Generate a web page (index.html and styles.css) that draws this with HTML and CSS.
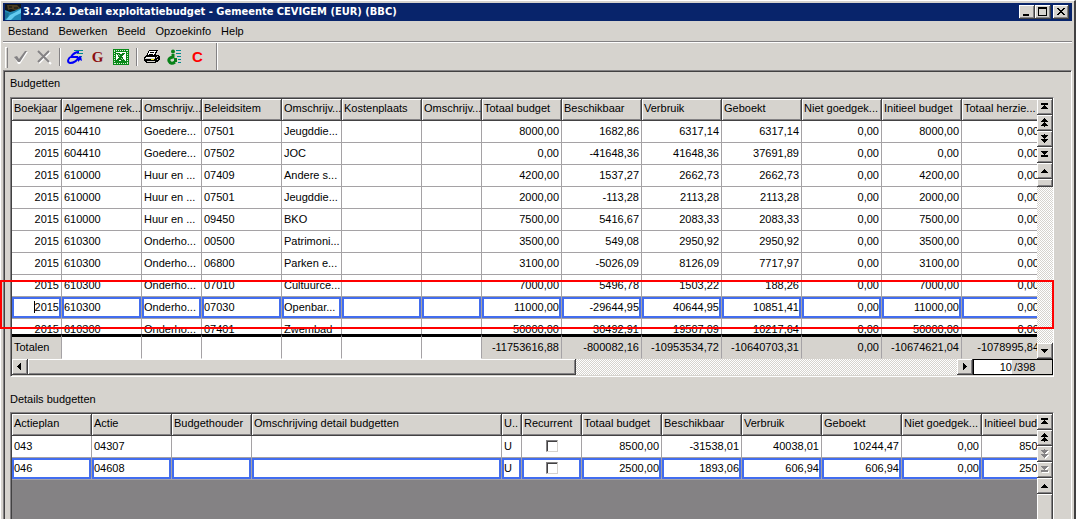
FILE: index.html
```html
<!DOCTYPE html>
<html lang="nl">
<head>
<meta charset="utf-8">
<title>3.2.4.2. Detail exploitatiebudget</title>
<link rel="stylesheet" href="styles.css">
</head>
<body>
<svg class="defs" aria-hidden="true">
  <symbol id="first" viewBox="0 0 9 9"><path d="M1 1h7v2H5v1h1v1h1v1h1v1H1V6h1V5h1V4h1V3H1z"/></symbol>
  <symbol id="pgup" viewBox="0 0 9 9"><path d="M4 0h1v1h1v1h1v1h1v1H5v1h1v1h1v1h1v1H5v1H4V8H1V7h1V6h1V5h1V4H1V3h1V2h1V1h1z"/></symbol>
  <symbol id="pgdn" viewBox="0 0 9 9"><path d="M4 9h1V8h1V7h1V6h1V5H5V4h1V3h1V2h1V1H5V0H4v1H1v1h1v1h1v1h1v1H1v1h1v1h1v1h1z"/></symbol>
  <symbol id="last" viewBox="0 0 9 9"><path d="M1 1h7v1H7v1H6v1H5v1h3v2H1V5h3V4H3V3H2V2H1z"/></symbol>
  <symbol id="up" viewBox="0 0 9 9"><path d="M4 3h1v1h1v1h1v1h1v1H1V6h1V5h1V4h1z"/></symbol>
  <symbol id="down" viewBox="0 0 9 9"><path d="M1 3h7v1H7v1H6v1H5v1H4V6H3V5H2V4H1z"/></symbol>
  <symbol id="left" viewBox="0 0 9 9"><path d="M2 4h1V3h1V2h1V1h1v7H5V7H4V6H3V5H2z"/></symbol>
  <symbol id="right" viewBox="0 0 9 9"><path d="M3 1h1v1h1v1h1v1h1v1H6v1H5v1H4v1H3z"/></symbol>
</svg>
<div class="window">
  <header class="titlebar">
    <svg class="app-icon" viewBox="0 0 16 16" aria-hidden="true"><path fill="#101418" d="M0 0h16v16H0z"/><path fill="#4a3c20" d="M2 1h10l3 3-2 3-7-2-3 1z"/><path fill="#29251a" d="M4 2h3v2H4zM9 3h4v2H9z"/><path fill="#2189b5" d="M0 6l5 2 4-1 7-3v12H0z"/><path fill="#63cbef" d="M1 16l4-5 6-3 5-3v4l-6 3-4 4z"/><path fill="#187194" d="M0 8l4 1-1 4-3 2z"/></svg>
    <h1>3.2.4.2. Detail exploitatiebudget - Gemeente CEVIGEM (EUR) (BBC)</h1>
    <button class="win-btn" aria-label="Minimaliseren"><svg viewBox="0 0 12 10"><path d="M2 7h6v2H2z"/></svg></button>
    <button class="win-btn" aria-label="Maximaliseren"><svg viewBox="0 0 12 10"><path fill-rule="evenodd" d="M1 0h9v9H1zM2 2v6h7V2z"/></svg></button>
    <button class="win-btn close" aria-label="Sluiten"><svg viewBox="0 0 12 10"><path d="M2 1h2v1h1v1h2V2h1V1h2v1H9v1H8v1H7v1h1v1h1v1h1v1H8V7H7V6H5v1H4v1H2V7h1V6h1V5h1V4H4V3H3V2H2z"/></svg></button>
  </header>
  <nav class="menubar">
    <button>Bestand</button><button>Bewerken</button><button>Beeld</button><button>Opzoekinfo</button><button>Help</button>
  </nav>
  <div class="toolbar">
    <span class="grip"></span>
    <button disabled aria-label="Bevestigen"><svg viewBox="0 0 16 16"><path fill="#fff" d="M2 9l2-1 2 3 6-8h3l-8 12H5z"/><path fill="#848284" d="M1 8l3-1 2 3 6-8h2L7 13H5z"/></svg></button>
    <button disabled aria-label="Annuleren"><svg viewBox="0 0 16 16"><path fill="none" stroke="#fff" stroke-width="2" d="M3 3l12 12M14 3L3 14"/><path fill="none" stroke="#848284" stroke-width="2" d="M2 2l11 11M13 2L2 13"/></svg></button>
    <span class="sep"></span>
    <button aria-label="Detail"><svg viewBox="0 0 16 16"><path fill="#008a8c" d="M7 1h9v1H7zM10 4h6v1h-6zM12 7h3v1h-3z"/><path fill="none" stroke="#0000f7" stroke-width="2" d="M12 3Q7 3 4 8h7M3 8q-4 5 0 6 6 0 9-6"/><path fill="#0000f7" d="M9 9l5-2 1 5-2-1-2 2v-3z"/></svg></button>
    <button class="letter-g">G</button>
    <button aria-label="Excel"><svg viewBox="0 0 16 16" shape-rendering="crispEdges"><path fill="#088a18" d="M0 0h16v16H0z"/><path fill="none" stroke="#d6efd6" stroke-dasharray="1 1" d="M1 1.500h14M2 14.500h13M1.500 2v13M14.500 1v14"/><path fill="#fff" d="M3 3h10v9H3z"/><path fill="#087d18" d="M3 4h4l5 8H8z"/><path fill="#087d18" d="M9 4h3l-6 8H3z"/><path fill="#9ccf9c" d="M5 5h1v1H5zM6 6h1v1H6zM8 9h1v1H8zM9 10h1v1H9z"/><path fill="#fff" d="M12 5h1v4h-1zM3 6h1v3H3z"/></svg></button>
    <span class="sep"></span>
    <button aria-label="Afdrukken"><svg viewBox="0 0 16 16" shape-rendering="crispEdges"><path fill="#000" d="M5 1h9v1h-1v2h-1v2h3v1h1v4h-1v1h-1v1h-2v1H2v-1H1v-1H0V8h1V7h1V6h1V4h1V2h1z"/><path fill="#fff" d="M5 2h7v1h-1v2h-1v1H4V4h1zM2 8h9v1H2z"/><path fill="#000" d="M6 3h4v1H6zM5 5h4v1H5z"/><path fill="#d6d3ce" d="M1 9h10v1H1zM3 12h8v1H3zM13 7h1v1h-1zM12 8h1v1h-1zM13 10h1v1h-1z"/><path fill="#f7f300" d="M7 10h3v1H7z"/></svg></button>
    <button aria-label="Info"><svg viewBox="0 0 16 16"><path fill="#008a8c" d="M9 1h5v1H9zM9 4h5v1H9zM10 7h4v1h-4zM11 10h3v1h-3zM11 13h3v1h-3z"/><circle cx="6" cy="2.500" r="2" fill="#088218"/><path fill="none" stroke="#088218" stroke-width="3" d="M6 5v3Q1 9 2 12q2 4 6 1"/><path fill="#088218" d="M7 9h3v4H7z"/></svg></button>
    <button class="letter-c">C</button>
    <span class="bar-end"></span>
  </div>
  <main class="panel">
    <h2>Budgetten</h2>
    <section class="grid" aria-label="Budgetten">
      <div class="pane">
        <div class="viewport budgets">
          <table>
            <colgroup><col class="w50"><col class="w80"><col class="w60"><col class="w80"><col class="w60"><col class="w80"><col class="w60"><col class="w80" span="7"></colgroup>
            <thead><tr><th>Boekjaar</th><th>Algemene rek...</th><th>Omschrijv...</th><th>Beleidsitem</th><th>Omschrijv...</th><th>Kostenplaats</th><th>Omschrijv...</th><th>Totaal budget</th><th>Beschikbaar</th><th>Verbruik</th><th>Geboekt</th><th>Niet goedgek...</th><th>Initieel budget</th><th>Totaal herzie...</th></tr></thead>
            <tbody>
              <tr><td class="n">2015</td><td>604410</td><td>Goedere...</td><td>07501</td><td>Jeugddie...</td><td></td><td></td><td class="n">8000,00</td><td class="n">1682,86</td><td class="n">6317,14</td><td class="n">6317,14</td><td class="n">0,00</td><td class="n">8000,00</td><td class="n">0,00</td></tr>
              <tr><td class="n">2015</td><td>604410</td><td>Goedere...</td><td>07502</td><td>JOC</td><td></td><td></td><td class="n">0,00</td><td class="n">-41648,36</td><td class="n">41648,36</td><td class="n">37691,89</td><td class="n">0,00</td><td class="n">0,00</td><td class="n">0,00</td></tr>
              <tr><td class="n">2015</td><td>610000</td><td>Huur en ...</td><td>07409</td><td>Andere s...</td><td></td><td></td><td class="n">4200,00</td><td class="n">1537,27</td><td class="n">2662,73</td><td class="n">2662,73</td><td class="n">0,00</td><td class="n">4200,00</td><td class="n">0,00</td></tr>
              <tr><td class="n">2015</td><td>610000</td><td>Huur en ...</td><td>07501</td><td>Jeugddie...</td><td></td><td></td><td class="n">2000,00</td><td class="n">-113,28</td><td class="n">2113,28</td><td class="n">2113,28</td><td class="n">0,00</td><td class="n">2000,00</td><td class="n">0,00</td></tr>
              <tr><td class="n">2015</td><td>610000</td><td>Huur en ...</td><td>09450</td><td>BKO</td><td></td><td></td><td class="n">7500,00</td><td class="n">5416,67</td><td class="n">2083,33</td><td class="n">2083,33</td><td class="n">0,00</td><td class="n">7500,00</td><td class="n">0,00</td></tr>
              <tr><td class="n">2015</td><td>610300</td><td>Onderho...</td><td>00500</td><td>Patrimoni...</td><td></td><td></td><td class="n">3500,00</td><td class="n">549,08</td><td class="n">2950,92</td><td class="n">2950,92</td><td class="n">0,00</td><td class="n">3500,00</td><td class="n">0,00</td></tr>
              <tr><td class="n">2015</td><td>610300</td><td>Onderho...</td><td>06800</td><td>Parken e...</td><td></td><td></td><td class="n">3100,00</td><td class="n">-5026,09</td><td class="n">8126,09</td><td class="n">7717,97</td><td class="n">0,00</td><td class="n">3100,00</td><td class="n">0,00</td></tr>
              <tr><td class="n">2015</td><td>610300</td><td>Onderho...</td><td>07010</td><td>Cultuurce...</td><td></td><td></td><td class="n">7000,00</td><td class="n">5496,78</td><td class="n">1503,22</td><td class="n">188,26</td><td class="n">0,00</td><td class="n">7000,00</td><td class="n">0,00</td></tr>
              <tr class="selected"><td class="n"><span class="caret">2015</span></td><td>610300</td><td>Onderho...</td><td>07030</td><td>Openbar...</td><td></td><td></td><td class="n">11000,00</td><td class="n">-29644,95</td><td class="n">40644,95</td><td class="n">10851,41</td><td class="n">0,00</td><td class="n">11000,00</td><td class="n">0,00</td></tr>
              <tr><td class="n">2015</td><td>610300</td><td>Onderho...</td><td>07401</td><td>Zwembad</td><td></td><td></td><td class="n">50000,00</td><td class="n">30492,91</td><td class="n">19507,09</td><td class="n">10217,64</td><td class="n">0,00</td><td class="n">50000,00</td><td class="n">0,00</td></tr>
            </tbody>
            <tfoot><tr><td class="total">Totalen</td><td></td><td></td><td></td><td></td><td></td><td></td><td class="n total">-11753616,88</td><td class="n total">-800082,16</td><td class="n total">-10953534,72</td><td class="n total">-10640703,31</td><td class="n total">0,00</td><td class="n total">-10674621,04</td><td class="n total">-1078995,84</td></tr></tfoot>
          </table>
        </div>
        <div class="rail">
          <button aria-label="Eerste"><svg><use href="#first"/></svg></button>
          <button aria-label="Pagina omhoog"><svg><use href="#pgup"/></svg></button>
          <button aria-label="Pagina omlaag"><svg><use href="#pgdn"/></svg></button>
          <button aria-label="Laatste"><svg><use href="#last"/></svg></button>
          <button aria-label="Omhoog"><svg><use href="#up"/></svg></button>
          <span class="thumb"></span>
          <span class="track"></span>
          <button aria-label="Omlaag"><svg><use href="#down"/></svg></button>
        </div>
      </div>
      <div class="hscroll">
        <button aria-label="Naar links"><svg><use href="#left"/></svg></button>
        <div class="track"><div class="hthumb"></div></div>
        <button aria-label="Naar rechts"><svg><use href="#right"/></svg></button>
        <label class="counter"><input value="10" aria-label="Rij"><span>/398</span></label>
      </div>
      <div class="marker"></div>
    </section>
    <h2 class="second">Details budgetten</h2>
    <section class="grid details" aria-label="Details budgetten">
      <div class="pane">
        <div class="viewport">
          <table>
            <colgroup><col class="w80" span="3"><col class="w250"><col class="w20"><col class="w60"><col class="w80" span="6"></colgroup>
            <thead><tr><th>Actieplan</th><th>Actie</th><th>Budgethouder</th><th>Omschrijving detail budgetten</th><th>U..</th><th>Recurrent</th><th>Totaal budget</th><th>Beschikbaar</th><th>Verbruik</th><th>Geboekt</th><th>Niet goedgek...</th><th>Initieel budget</th></tr></thead>
            <tbody>
              <tr><td>043</td><td>04307</td><td></td><td></td><td>U</td><td class="check"><input type="checkbox" aria-label="Recurrent 043"></td><td class="n">8500,00</td><td class="n">-31538,01</td><td class="n">40038,01</td><td class="n">10244,47</td><td class="n">0,00</td><td class="n">8500,00</td></tr>
              <tr class="selected"><td>046</td><td>04608</td><td></td><td></td><td>U</td><td class="check"><input type="checkbox" aria-label="Recurrent 046"></td><td class="n">2500,00</td><td class="n">1893,06</td><td class="n">606,94</td><td class="n">606,94</td><td class="n">0,00</td><td class="n">2500,00</td></tr>
            </tbody>
          </table>
        </div>
        <div class="rail">
          <button aria-label="Eerste"><svg><use href="#first"/></svg></button>
          <button aria-label="Pagina omhoog"><svg><use href="#pgup"/></svg></button>
          <button disabled aria-label="Pagina omlaag"><svg><use href="#pgdn"/></svg></button>
          <button disabled aria-label="Laatste"><svg><use href="#last"/></svg></button>
          <button aria-label="Omhoog"><svg><use href="#up"/></svg></button>
          <span class="thumb fill"></span>
        </div>
      </div>
    </section>
  </main>
</div>
</body>
</html>
```
FILE: styles.css
```css
:root {
  --face: #d6d3ce;
  --shadow: #848284;
  --dark: #424142;
  --line: #a5a2a5;
  --blue: #426def;
}
* { box-sizing: border-box; }
body {
  margin: 0;
  height: 100vh;
  overflow: hidden;
  background: var(--face);
  color: #000;
  font: 11px/13px "Liberation Sans", Arial, sans-serif;
}
button {
  margin: 0;
  padding: 0;
  border: 0;
  background: none;
  color: inherit;
  font: inherit;
}
svg { display: block; }
.defs { position: absolute; width: 0; height: 0; }

.window {
  display: flex;
  flex-direction: column;
  height: 100vh;
  padding: 2px 2px 0 2px;
  border-top: 1px solid #fff;
  border-left: 1px solid #fff;
  border-right: 2px solid var(--dark);
}

/* Title bar */
.titlebar {
  display: flex;
  flex: none;
  align-items: center;
  height: 18px;
  padding: 0 3px 0 2px;
  background: #08246b;
}
.app-icon { width: 16px; height: 16px; }
h1 {
  flex: 1;
  margin: 0 0 0 2px;
  color: #fff;
  font: bold 11px/16px "DejaVu Sans Condensed", "DejaVu Sans", sans-serif;
  white-space: nowrap;
}
.win-btn {
  display: grid;
  place-items: center;
  width: 16px;
  height: 14px;
  background: var(--face);
  box-shadow: inset -1px -1px var(--dark), inset 1px 1px #fff, inset -2px -2px var(--shadow);
}
.win-btn svg { width: 12px; height: 10px; }
.close { margin-left: 2px; }

/* Menu and toolbar */
.menubar {
  display: flex;
  flex: none;
  gap: 10px;
  height: 21px;
  padding-left: 5px;
  border-bottom: 1px solid var(--shadow);
}
.menubar button { line-height: 20px; }
.toolbar {
  display: flex;
  flex: none;
  align-items: flex-start;
  height: 28px;
  padding-top: 2px;
  border-top: 1px solid #fff;
}
.toolbar button {
  display: grid;
  align-items: center;
  justify-items: start;
  width: 23px;
  height: 24px;
  padding-left: 4px;
}
.toolbar svg { width: 16px; height: 16px; }
.grip {
  width: 3px;
  height: 21px;
  margin: 2px 1px 0 2px;
  border-top: 1px solid #fff;
  border-left: 1px solid #fff;
  border-right: 1px solid var(--shadow);
}
.sep {
  width: 2px;
  height: 18px;
  margin: 3px 2px 0 4px;
  border-left: 1px solid var(--shadow);
  border-right: 1px solid #fff;
}
.toolbar .letter-g, .toolbar .letter-c { justify-items: center; padding: 0; }
.toolbar .letter-g { color: #8c1010; font: bold 15px/16px "Liberation Serif", serif; }
.toolbar .letter-c { color: #f00; font: bold 15px/16px "Liberation Sans", sans-serif; }
.bar-end {
  align-self: stretch;
  width: 2px;
  margin: -2px 0 0 7px;
  border-left: 1px solid var(--shadow);
  border-right: 1px solid #fff;
}

/* Content */
.panel {
  display: flex;
  flex: 1;
  flex-direction: column;
  min-height: 0;
  padding: 6px 17px 0 6px;
  border: 1px solid var(--shadow);
  border-right-color: #fff;
  border-bottom: 0;
  box-shadow: inset 1px 1px var(--dark);
}
h2 { margin: 0 0 7px; font: inherit; }
.second { margin: 16px 0 6px; }
.grid {
  position: relative;
  border: 1px solid var(--shadow);
  border-right-color: #fff;
  border-bottom-color: #fff;
  padding: 1px 0 1px 1px;
  background: linear-gradient(var(--dark), var(--dark)) top / 100% 1px no-repeat, linear-gradient(var(--dark), var(--dark)) left / 1px 100% no-repeat, var(--face);
}
.details { flex: 1; min-height: 0; padding-bottom: 0; border-bottom: 0; }
.details .pane { height: 100%; }
.pane { display: flex; }
.viewport { flex: 1; min-width: 0; overflow: hidden; background: var(--shadow); }
.budgets { height: 260px; background: #fff; }

table { table-layout: fixed; width: 0; border-collapse: separate; border-spacing: 0; }
.w20 { width: 20px; }
.w50 { width: 50px; }
.w60 { width: 60px; }
.w80 { width: 80px; }
.w250 { width: 250px; }
th, td {
  height: 22px;
  padding: 0 2px 1px;
  border-right: 1px solid var(--line);
  border-bottom: 1px solid var(--line);
  background: #fff;
  font-weight: normal;
  text-align: left;
  white-space: nowrap;
  overflow: hidden;
}
th {
  padding-bottom: 3px;
  border-color: var(--dark);
  background: var(--face);
  box-shadow: inset 1px 1px #fff, inset -1px -1px var(--shadow);
}
.n { text-align: right; }
.selected td { box-shadow: inset 0 0 0 2px var(--blue); }
.caret { border-left: 1px solid #000; }
tfoot td {
  position: sticky;
  bottom: 0;
  height: 25px;
  border-top: 3px solid #000;
  border-bottom-color: #fff;
}
tfoot .total { border-bottom-color: var(--face); background: var(--face); }
.check { text-align: center; }
.check input {
  appearance: none;
  display: block;
  width: 12px;
  height: 12px;
  margin: 0 auto;
  border: 1px solid var(--shadow);
  border-right-color: var(--face);
  border-bottom-color: var(--face);
  background: #fff;
  box-shadow: inset 1px 1px var(--dark);
}

/* Scroll controls */
.rail { display: flex; flex: none; flex-direction: column; width: 16px; }
.rail button, .hscroll button {
  display: grid;
  flex: none;
  place-items: start;
  width: 16px;
  height: 16px;
  padding: 3px 0 0 3px;
  background: var(--face);
  box-shadow: inset -1px -1px var(--dark), inset 1px 1px #fff, inset -2px -2px var(--shadow);
}
.rail svg, .hscroll svg { width: 9px; height: 9px; shape-rendering: crispEdges; }
.rail button:disabled svg { fill: var(--shadow); filter: drop-shadow(1px 1px #fff); }
.thumb, .hthumb {
  background: var(--face);
  box-shadow: inset -1px -1px var(--dark), inset 1px 1px #fff, inset -2px -2px var(--shadow);
}
.thumb { flex: none; height: 8px; }
.thumb.fill { flex: 1; box-shadow: inset -1px 0 var(--dark), inset 1px 1px #fff, inset -2px 0 var(--shadow); }
.track { flex: 1; background: repeating-conic-gradient(#fff 0 25%, var(--face) 0 50%) 0 0 / 2px 2px; }
.hscroll { display: flex; height: 16px; }
.hthumb { width: 59%; height: 100%; }
.counter {
  display: flex;
  align-items: center;
  width: 80px;
  border: 1px solid #000;
}
.counter input {
  width: 38px;
  height: 14px;
  padding: 0;
  border: 0;
  background: #fff;
  font: inherit;
  text-align: right;
}
.counter span { padding-left: 2px; }

/* Annotation around the selected row */
.marker {
  position: absolute;
  top: 182px;
  left: -11px;
  right: -1px;
  height: 49px;
  border: 2px solid #f00;
  pointer-events: none;
}
```
